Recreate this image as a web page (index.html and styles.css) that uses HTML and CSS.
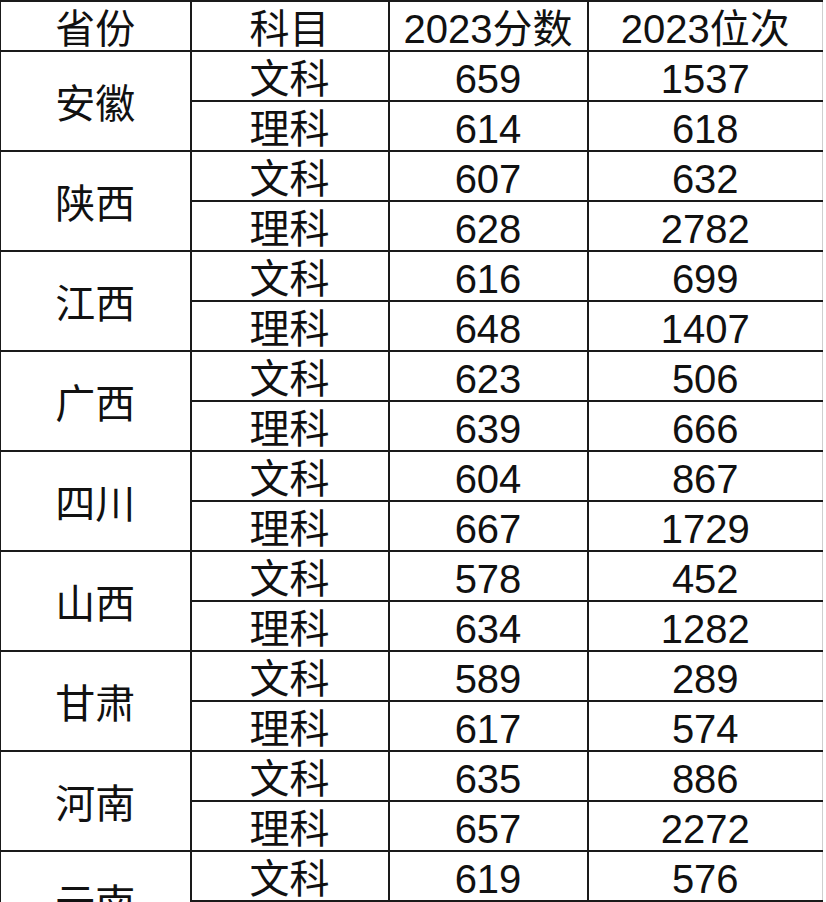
FILE: index.html
```html
<!DOCTYPE html>
<html lang="zh-CN">
<head>
<meta charset="utf-8">
<title>2023分数位次</title>
<link rel="stylesheet" href="styles.css">
</head>
<body>
<table class="score-table">
  <colgroup>
    <col class="c-prov"><col class="c-subj"><col class="c-score"><col class="c-rank">
  </colgroup>
  <thead>
    <tr><th>省份</th><th>科目</th><th>2023分数</th><th>2023位次</th></tr>
  </thead>
  <tbody>
    <tr><td rowspan="2" class="prov">安徽</td><td>文科</td><td>659</td><td>1537</td></tr>
    <tr><td>理科</td><td>614</td><td>618</td></tr>
    <tr><td rowspan="2" class="prov">陕西</td><td>文科</td><td>607</td><td>632</td></tr>
    <tr><td>理科</td><td>628</td><td>2782</td></tr>
    <tr><td rowspan="2" class="prov">江西</td><td>文科</td><td>616</td><td>699</td></tr>
    <tr><td>理科</td><td>648</td><td>1407</td></tr>
    <tr><td rowspan="2" class="prov">广西</td><td>文科</td><td>623</td><td>506</td></tr>
    <tr><td>理科</td><td>639</td><td>666</td></tr>
    <tr><td rowspan="2" class="prov">四川</td><td>文科</td><td>604</td><td>867</td></tr>
    <tr><td>理科</td><td>667</td><td>1729</td></tr>
    <tr><td rowspan="2" class="prov">山西</td><td>文科</td><td>578</td><td>452</td></tr>
    <tr><td>理科</td><td>634</td><td>1282</td></tr>
    <tr><td rowspan="2" class="prov">甘肃</td><td>文科</td><td>589</td><td>289</td></tr>
    <tr><td>理科</td><td>617</td><td>574</td></tr>
    <tr><td rowspan="2" class="prov">河南</td><td>文科</td><td>635</td><td>886</td></tr>
    <tr><td>理科</td><td>657</td><td>2272</td></tr>
    <tr><td rowspan="2" class="prov">云南</td><td>文科</td><td>619</td><td>576</td></tr>
    <tr><td></td><td></td><td></td></tr>
  </tbody>
</table>
</body>
</html>
```

FILE: styles.css
```css
html, body {
  margin: 0;
  padding: 0;
  background: #ffffff;
  overflow: hidden;
}

.score-table {
  border-collapse: collapse;
  table-layout: fixed;
  width: 822px;
  font-family: "Liberation Sans", "Noto Sans CJK SC", sans-serif;
  font-size: 40px;
  color: #111111;
  border-top: 1px solid #333333;
}

.c-prov { width: 190px; }
.c-subj { width: 198px; }
.c-score { width: 199px; }
.c-rank { width: 235px; }

.score-table th,
.score-table td {
  height: 50px;
  padding: 6px 0 0 0;
  box-sizing: border-box;
  line-height: 42px;
  text-align: center;
  vertical-align: middle;
  font-weight: normal;
  border: 2px solid #1a1a1a;
  white-space: nowrap;
}

.score-table th:first-child,
.score-table td.prov {
  border-left: 1px solid #1a1a1a;
}

.score-table th:last-child,
.score-table td:last-child {
  border-right: 1px solid #cfcfcf;
}
```
